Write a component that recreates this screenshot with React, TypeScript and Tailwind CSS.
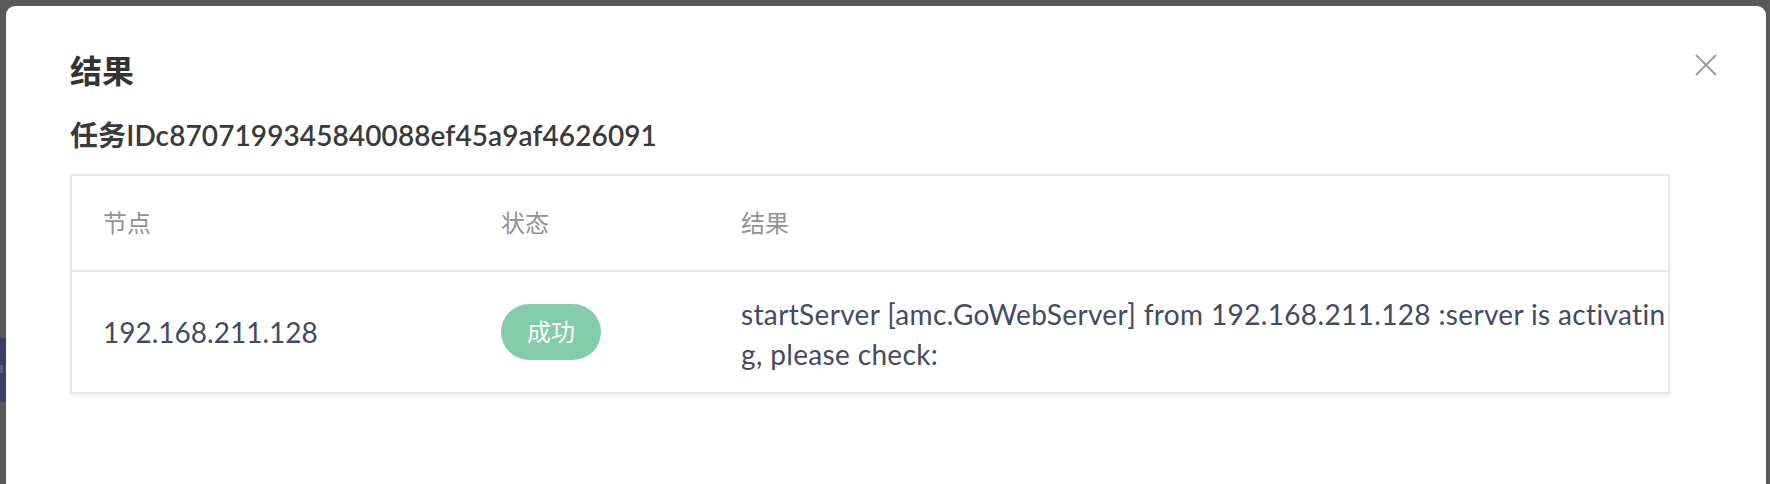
import React from "react";

const FONT = "font-['Lato','Noto_Sans_CJK_SC',sans-serif]";

export default function App() {
  return (
    <div className={`relative w-[1770px] h-[484px] overflow-hidden bg-[#595959] ${FONT}`}>
      {/* page content peeking behind the overlay */}
      <div className="absolute left-0 top-[338px] w-[6px] h-[64px] bg-[#3b4163]">
        <div className="mt-[27px] w-[3px] h-[8px] bg-[#5d6072]" />
      </div>

      <div className="relative ml-[6px] mt-[6px] w-[1760px] h-[486px] rounded-[9px] bg-white pl-[64px] pt-[45px]">
        <button className="absolute right-[49px] top-[48px] w-[22px] h-[22px] flex items-center justify-center">
          <svg width="22" height="22" viewBox="0 0 22 22" fill="none">
            <path d="M1 1L21 21M21 1L1 21" stroke="#9a9a9a" strokeWidth="1.8" />
          </svg>
        </button>

        <h2 className="text-[32px] leading-[40px] font-semibold text-[#333333]">结果</h2>
        <div className="mt-[24px] text-[28px] leading-[40px] font-semibold text-[#3a3a3a] tracking-[0.1px]">
          任务IDc8707199345840088ef45a9af4626091
        </div>

        <div className="mt-[19px] w-[1600px] border-2 border-[#e5e6ee] shadow-[0_3px_4px_rgba(0,0,0,0.05)]">
          <div className="grid grid-cols-[398px_240px_1fr] h-[96px] items-center border-b-2 border-[#e5e6ee] text-[24px] leading-[40px] text-[#909399]">
            <div className="pl-[31px]">节点</div>
            <div className="pl-[31px]">状态</div>
            <div className="pl-[31px]">结果</div>
          </div>
          <div className="grid grid-cols-[398px_240px_1fr] h-[120px] items-center text-[28px] leading-[40px] text-[#434a63]">
            <div className="pl-[31px]">192.168.211.128</div>
            <div className="pl-[31px]">
              <span className="inline-flex items-center justify-center w-[100px] h-[56px] rounded-full bg-[#84cbaa] text-[24px] text-white">
                成功
              </span>
            </div>
            <div className="pl-[31px] pr-0 pt-[4px] break-all tracking-[0.35px]">
              startServer [amc.GoWebServer] from 192.168.211.128 :server is activating, please check:
            </div>
          </div>
        </div>
      </div>
    </div>
  );
}
